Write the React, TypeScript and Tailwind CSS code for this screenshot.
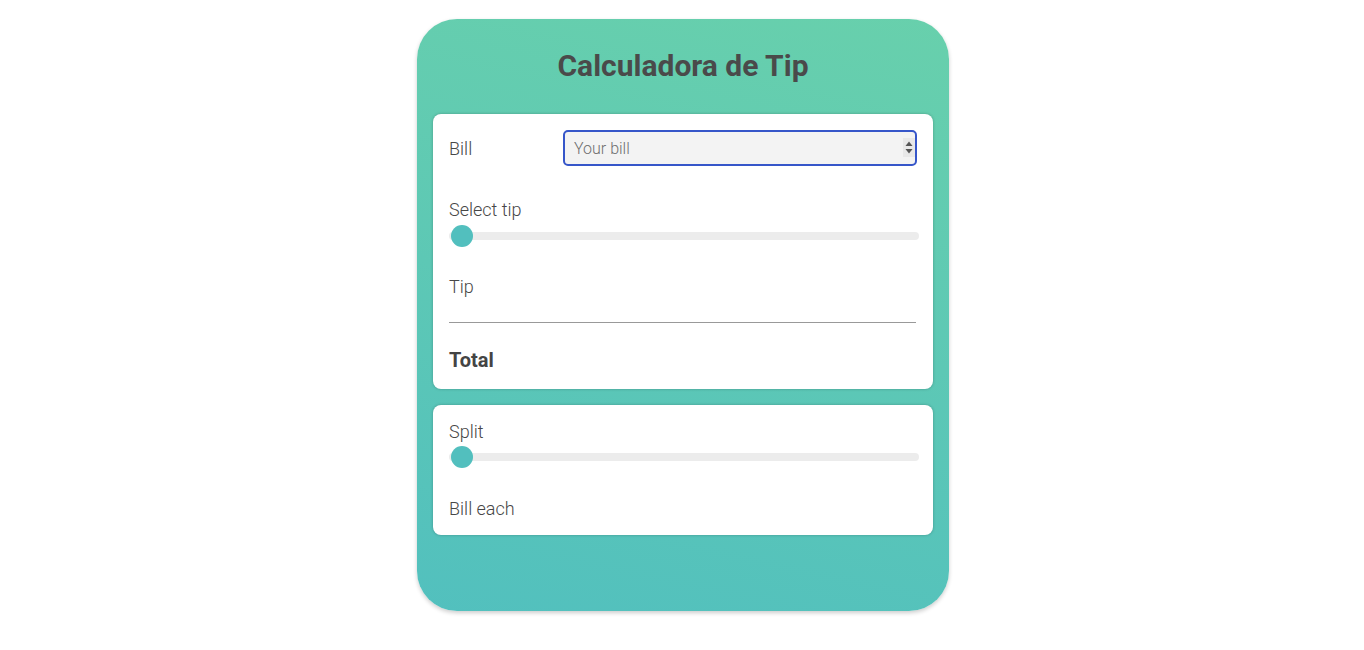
import React from "react";

const Slider = ({ className = "" }: { className?: string }) => (
  <div className={`relative h-[22px] w-[470px] ${className}`}>
    <div className="absolute left-0 right-0 top-[7px] h-2 rounded-full bg-[#ececec]" />
    <div className="absolute left-[2px] top-0 h-[22px] w-[22px] rounded-full bg-[#52bfbe]" />
  </div>
);

const App = () => {
  return (
    <div className="min-h-screen bg-white pt-[19px] font-['Roboto','Liberation_Sans',sans-serif] text-[#474747]">
      <div className="mx-auto w-[532px] translate-x-px rounded-[40px] bg-linear-[12deg] from-[#52c0be] to-[#68d0ac] px-4 pt-[29px] pb-[76px] shadow-[0_2px_4px_rgba(0,0,0,0.2)]">
        <h1 className="text-center text-[30px] font-bold leading-[36px] text-[#4a4a4a]">
          Calculadora de Tip
        </h1>

        <div className="mt-[30px] rounded-lg bg-white p-4 pb-[17px] shadow-[0_0_3px_rgba(0,0,0,0.25)]">
          <div className="flex h-9 items-center">
            <label className="w-[114px] pt-px text-[18px] font-light">Bill</label>
            <div className="relative flex-1">
              <input
                type="text"
                placeholder="Your bill"
                className="h-9 w-full rounded-[5px] border-2 border-[#3656c9] bg-[#f3f3f3] pl-[9px] text-[16px] font-light outline-none placeholder:text-[#6f6f6f]"
              />
              <svg
                className="absolute right-[2px] top-[8px]"
                width="12"
                height="19"
                viewBox="0 0 12 19"
              >
                <rect width="12" height="19" fill="#e8e8e8" />
                <path d="M2.5 8 L6 3.5 L9.5 8 Z" fill="#555" />
                <path d="M2.5 11 L6 15.5 L9.5 11 Z" fill="#555" />
              </svg>
            </div>
          </div>

          <div className="mt-[34px] h-5 text-[18px] font-light leading-5">Select tip</div>
          <Slider className="mt-[5px]" />

          <div className="mt-[30px] h-5 text-[18px] font-light leading-5">Tip</div>
          <div className="mt-[25px] w-[467px] border-t border-[#999]" />

          <div className="mt-[25px] h-6 text-[20px] font-bold leading-6 text-[#444]">Total</div>
        </div>

        <div className="mt-4 rounded-lg bg-white px-4 pt-[17px] pb-4 shadow-[0_0_3px_rgba(0,0,0,0.25)]">
          <div className="h-5 text-[18px] font-light leading-5">Split</div>
          <Slider className="mt-[4px]" />
          <div className="mt-[31px] h-5 text-[18px] font-light leading-5">Bill each</div>
        </div>
      </div>
    </div>
  );
};

export default App;
